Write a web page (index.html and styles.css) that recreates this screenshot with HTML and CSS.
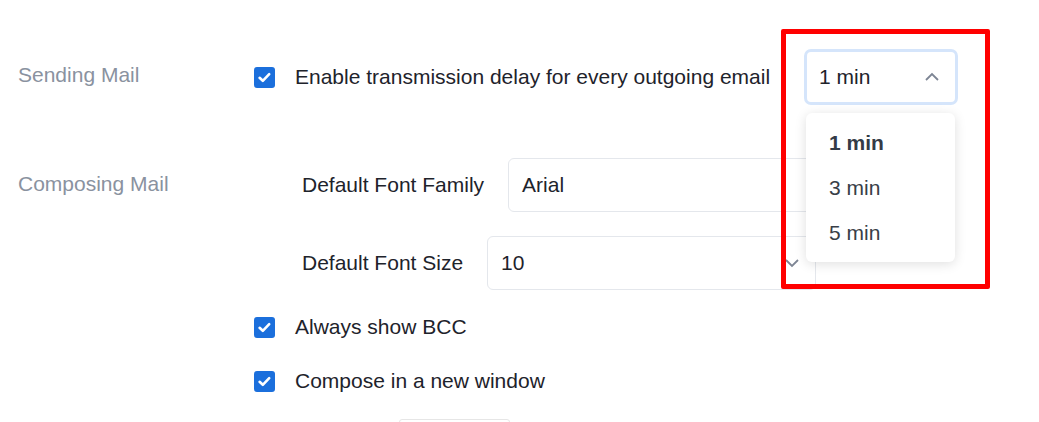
FILE: index.html
```html
<!DOCTYPE html>
<html lang="en">
<head>
<meta charset="utf-8">
<title>Mail settings</title>
<link rel="stylesheet" href="styles.css">
</head>
<body>
<div class="page">
  <section class="section section-sending">
    <div class="section-label">Sending Mail</div>
    <div class="section-body">
      <div class="check-row">
        <span class="checkbox"><svg viewBox="0 0 21 21" width="21" height="21"><path d="M5.6 10.8l3.2 3 6.4-6.6" fill="none" stroke="#fff" stroke-width="2.6" stroke-linecap="round" stroke-linejoin="round"/></svg></span>
        <span class="check-text">Enable transmission delay for every outgoing email</span>
        <div class="select select-delay">
          <span class="select-value">1 min</span>
          <svg class="chevron" viewBox="0 0 16 10" width="16" height="10"><path d="M2 8l6-6 6 6" fill="none" stroke="#7d8594" stroke-width="1.8"/></svg>
          <ul class="select-menu">
            <li class="select-option is-selected">1 min</li>
            <li class="select-option">3 min</li>
            <li class="select-option">5 min</li>
          </ul>
        </div>
      </div>
    </div>
  </section>

  <section class="section section-composing">
    <div class="section-label">Composing Mail</div>
    <div class="section-body">
      <div class="field-row">
        <span class="field-label">Default Font Family</span>
        <div class="field-input"><span class="field-value">Arial</span></div>
      </div>
      <div class="field-row">
        <span class="field-label">Default Font Size</span>
        <div class="field-input"><span class="field-value">10</span>
          <svg class="chevron" viewBox="0 0 16 10" width="16" height="10"><path d="M2 2l6 6 6-6" fill="none" stroke="#7d8594" stroke-width="1.8"/></svg>
        </div>
      </div>
      <div class="check-row check-row-spaced first-check">
        <span class="checkbox"><svg viewBox="0 0 21 21" width="21" height="21"><path d="M5.6 10.8l3.2 3 6.4-6.6" fill="none" stroke="#fff" stroke-width="2.6" stroke-linecap="round" stroke-linejoin="round"/></svg></span>
        <span class="check-text">Always show BCC</span>
      </div>
      <div class="check-row check-row-spaced">
        <span class="checkbox"><svg viewBox="0 0 21 21" width="21" height="21"><path d="M5.6 10.8l3.2 3 6.4-6.6" fill="none" stroke="#fff" stroke-width="2.6" stroke-linecap="round" stroke-linejoin="round"/></svg></span>
        <span class="check-text">Compose in a new window</span>
      </div>
      <div class="more-row">
        <div class="more-box"></div>
      </div>
    </div>
  </section>

  <div class="annotation"></div>
</div>
</body>
</html>
```

FILE: styles.css
```css
* { box-sizing: border-box; }

html, body {
  margin: 0;
  padding: 0;
  background: #ffffff;
}

body {
  font-family: "Liberation Sans", Arial, sans-serif;
  font-size: 21px;
  color: #1e232b;
  overflow: hidden;
}

.page {
  position: relative;
  padding-top: 49px;
  height: 422px;
  overflow: hidden;
}

.section {
  display: flex;
  align-items: flex-start;
}

.section-composing {
  margin-top: 53px;
}

.section-label {
  width: 254px;
  flex: none;
  padding-left: 18px;
  line-height: 51px;
  color: #8a929f;
}

.section-body {
  display: flex;
  flex-direction: column;
}

.check-row {
  display: flex;
  align-items: center;
  gap: 20px;
  height: 56px;
}

.check-row-spaced {
  height: 54px;
}

.first-check {
  margin-top: 10px;
}

.checkbox {
  width: 21px;
  height: 21px;
  flex: none;
  border-radius: 3px;
  background: #1b6fdc;
  display: flex;
}

.check-text {
  white-space: nowrap;
}

.select {
  position: relative;
  display: flex;
  align-items: center;
  justify-content: space-between;
}

.select-delay {
  margin-left: 14px;
  width: 154px;
  height: 56px;
  border: 3px solid #d5e5fb;
  border-radius: 7px;
  padding: 0 15px 0 12px;
}

.select-menu {
  position: absolute;
  top: calc(100% + 11px);
  left: -1px;
  width: 149px;
  margin: 0;
  padding: 7px 0;
  list-style: none;
  background: #ffffff;
  border-radius: 6px;
  box-shadow: 0 2px 12px rgba(0, 0, 0, 0.13);
  z-index: 2;
}

.select-option {
  height: 45px;
  line-height: 45px;
  padding-left: 23px;
  color: #383e47;
}

.select-option.is-selected {
  font-weight: bold;
  color: #343b46;
}

.field-row {
  display: flex;
  align-items: center;
  gap: 24px;
  width: 562px;
  padding-left: 48px;
  height: 54px;
}

.field-row + .field-row {
  margin-top: 24px;
}

.field-label {
  white-space: nowrap;
}

.field-input {
  flex: 1;
  height: 54px;
  border: 1px solid #e4e7ec;
  border-radius: 6px;
  display: flex;
  align-items: center;
  justify-content: space-between;
  padding: 0 15px 0 13px;
}

.chevron {
  display: block;
  flex: none;
}

.more-row {
  padding-left: 145px;
  padding-top: 11px;
}

.more-box {
  width: 111px;
  height: 40px;
  border: 1px solid #e6e6e6;
  border-radius: 3px;
}

.annotation {
  position: absolute;
  left: 781px;
  top: 29px;
  width: 209px;
  height: 260px;
  border: 5px solid #ff0000;
  border-radius: 2px;
  pointer-events: none;
  z-index: 3;
}
```
